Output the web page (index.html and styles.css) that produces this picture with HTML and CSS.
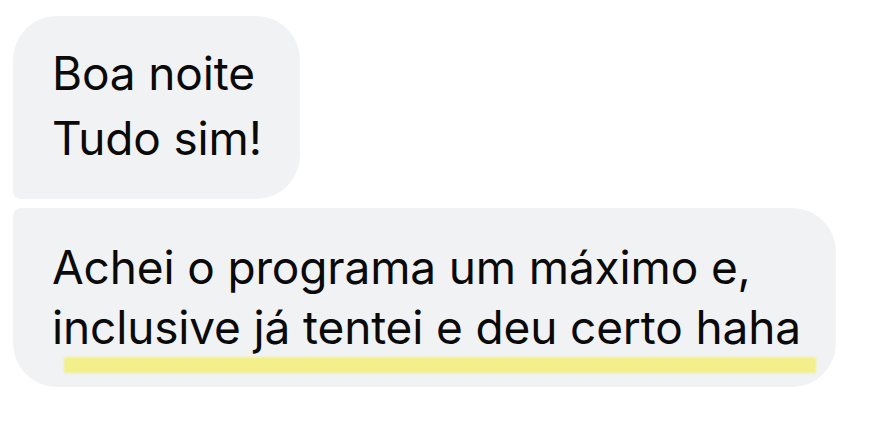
FILE: index.html
```html
<!DOCTYPE html>
<html>
<head>
<meta charset="utf-8">
<link rel="stylesheet" href="styles.css">
</head>
<body>
<div class="thread">
  <div class="bubble first">
    <div class="line">Boa noite</div>
    <div class="line">Tudo sim!</div>
  </div>
  <div class="bubble last">
    <div class="line">Achei o programa um máximo e,</div>
    <div class="line">inclusive já tentei e deu certo haha</div>
    <div class="highlight"></div>
  </div>
</div>
</body>
</html>
```
FILE: styles.css
```css
html, body {
  margin: 0;
  padding: 0;
  background: #ffffff;
}
.thread {
  display: flex;
  flex-direction: column;
  align-items: flex-start;
  gap: 9px;
  padding: 16px 0 0 13px;
  font-family: "Inter", "Liberation Sans", sans-serif;
  font-size: 46px;
  letter-spacing: -0.15px;
  color: #0a0a0a;
}
.bubble {
  position: relative;
  background: #f1f2f4;
  box-sizing: border-box;
}
.first {
  padding: 25px 38px 28px 39px;
  line-height: 65px;
  border-radius: 44px 44px 44px 8px;
}
.last {
  padding: 29px 35px 30px 39px;
  line-height: 60px;
  border-radius: 8px 44px 44px 44px;
}
.line {
  white-space: nowrap;
}
.highlight {
  position: absolute;
  left: 51px;
  top: 149px;
  width: 752px;
  height: 16px;
  background: #f3f08c;
  filter: blur(1px);
}
```
